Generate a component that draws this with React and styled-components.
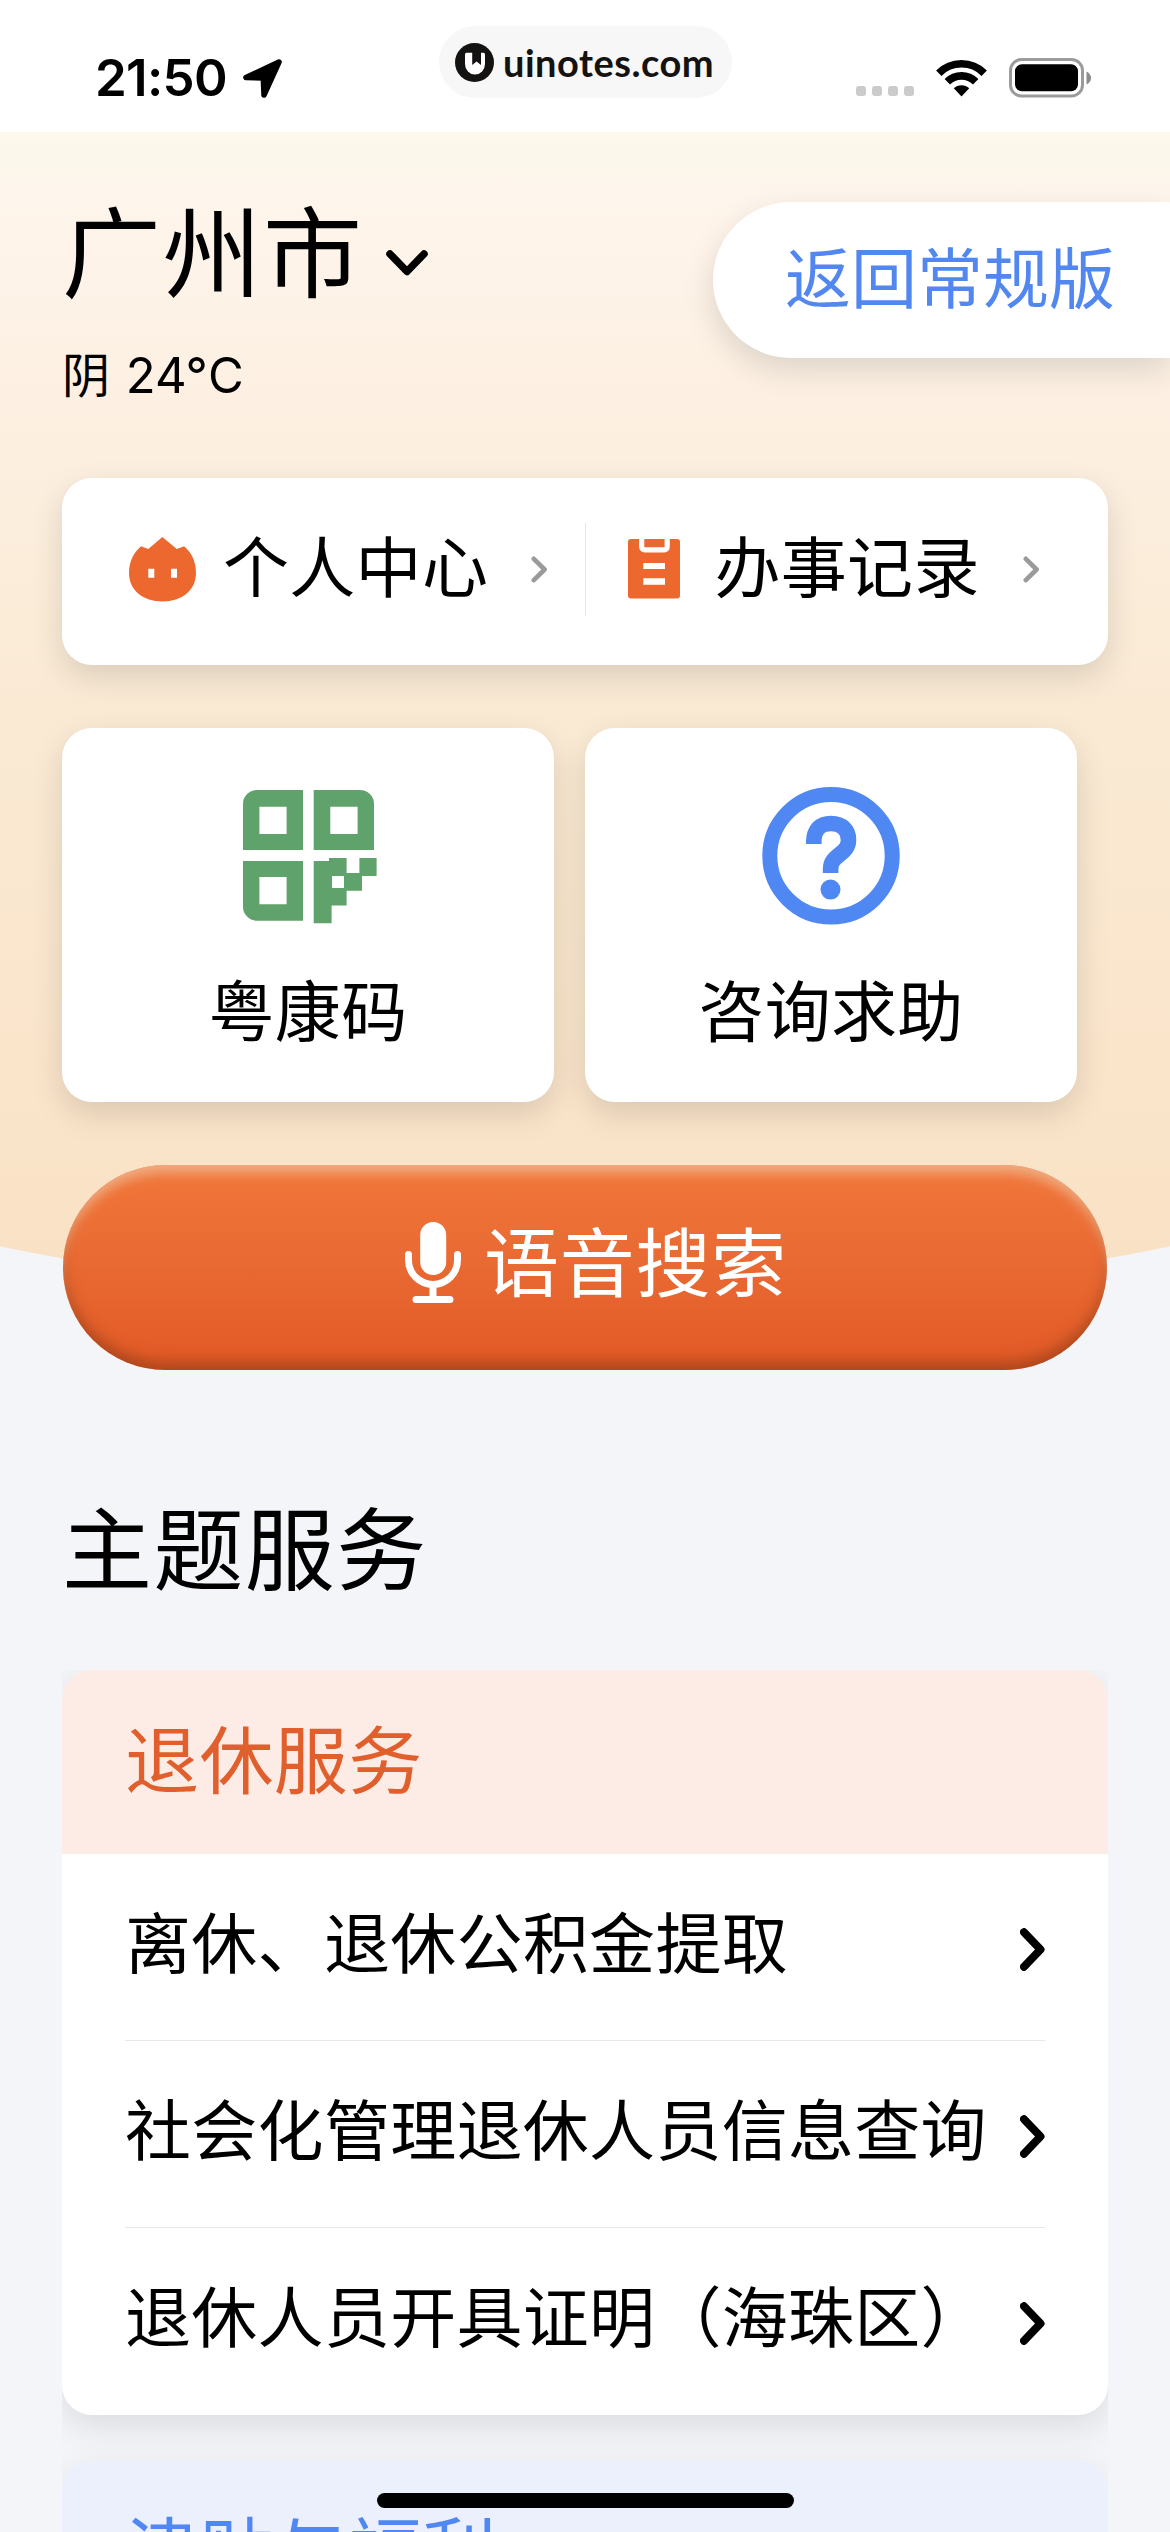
import styled, { createGlobalStyle } from "styled-components";

const GlobalStyle = createGlobalStyle`
  * {
    box-sizing: border-box;
  }

  body {
    margin: 0;
    background-color: #f3f5f9;
    color: #000;
    font-family: "Noto Sans CJK SC", sans-serif;
  }
`;

const Page = styled.div`
  width: 1170px;
  height: 2532px;
  overflow: hidden;
  background-color: #f3f5f9;
`;

const StatusBar = styled.header`
  height: 132px;
  display: flex;
  justify-content: space-between;
  padding: 0 79px 0 95px;
  background-color: #fff;
`;

const StatusLeft = styled.div`
  width: 344px;
  height: 98px;
  display: flex;
  align-items: flex-end;
  gap: 15px;
`;

const Time = styled.span`
  height: 60px;
  line-height: 80px;
  width: 133px;
  font-family: Inter, sans-serif;
  font-size: 51px;
  font-weight: 600;
  letter-spacing: -0.7px;
  white-space: nowrap;
`;

const SitePill = styled.div`
  width: 293px;
  height: 72px;
  margin-top: 26px;
  padding-left: 16px;
  display: flex;
  align-items: center;
  gap: 9px;
  border-radius: 36px;
  background-color: #f7f7f7;
  color: #151212;
  font-family: Lato, sans-serif;
  font-size: 38px;
  font-weight: 700;
  letter-spacing: 0.5px;
  line-height: 70px;
`;

const StatusRight = styled.div`
  flex: 1;
  height: 98px;
  display: flex;
  justify-content: flex-end;
  align-items: flex-end;
  gap: 22px;
`;

const SignalDots = styled.div`
  display: flex;
  gap: 6px;
  padding-bottom: 2px;

  i {
    width: 10px;
    height: 10px;
    border-radius: 3px;
    background-color: #cbcbcb;
  }
`;

const Hero = styled.section`
  height: 1174px;
  padding: 0 62px;
  background: radial-gradient(
      circle 2925px at 50% -1751px,
      transparent calc(100% - 1px),
      #f3f5f9 100%
    ),
    linear-gradient(
      #fcf8eb 0,
      #fcf7eb 30px,
      #fef5ec 60px,
      #fdf0e2 270px,
      #faead4 580px,
      #fae4c9 1000px,
      #f8e0c2 1174px
    );
`;

const TopRow = styled.div`
  height: 346px;
  display: flex;
  justify-content: space-between;
  margin-right: -62px;
`;

const City = styled.div`
  display: flex;
  margin-top: 60px;
  font-size: 99px;
  line-height: 110px;
  letter-spacing: 1.5px;

  svg {
    margin: 58px 0 0 22px;
  }
`;

const Weather = styled.div`
  margin-top: 40px;
  font-size: 48px;
  line-height: 60px;

  span {
    margin-left: 5px;
    font-family: Inter, sans-serif;
    font-size: 49px;
  }
`;

const BackPill = styled.div`
  width: 457px;
  height: 156px;
  margin-top: 70px;
  padding-left: 72px;
  border-radius: 78px 0 0 78px;
  background-color: #fff;
  box-shadow: 0 12px 32px rgba(0, 0, 0, 0.13);
  color: #5287f0;
  font-size: 66px;
  line-height: 144px;
`;

const Card = styled.div`
  display: flex;
  border-radius: 30px;
  background-color: #fff;
  box-shadow: 0 12px 32px rgba(0, 0, 0, 0.13);
`;

const LinkCard = styled(Card)`
  height: 187px;
  align-items: center;
  padding-bottom: 5px;
`;

const LinkItem = styled.div`
  width: 523px;
  display: flex;
  align-items: center;
  padding-left: ${({ $left }) => $left}px;
  font-size: 66px;
  line-height: 94px;
  letter-spacing: 0.3px;
`;

const LinkLabel = styled.span`
  width: 308px;
  margin-left: ${({ $gap }) => $gap}px;
  padding-bottom: 12px;
`;

const Divider = styled.i`
  width: 1px;
  height: 93px;
  background-color: #e6e6e6;
`;

const Tiles = styled.div`
  display: flex;
  gap: 31px;
  margin: 63px 0;
`;

const Tile = styled(Card)`
  width: 492px;
  height: 374px;
  flex-direction: column;
  align-items: center;
  padding-top: ${({ $top }) => $top}px;
`;

const TileLabel = styled.span`
  margin-top: ${({ $gap }) => $gap}px;
  font-size: 66px;
  line-height: 96px;
  letter-spacing: 0.3px;
`;

const VoiceButton = styled.div`
  height: 205px;
  margin: 0 1px;
  padding: 0 0 7px 22px;
  display: flex;
  justify-content: center;
  align-items: center;
  gap: 23px;
  border-radius: 103px;
  background: linear-gradient(#f1773a, #ea6c34 40%, #e25926);
  box-shadow: inset 0 12px 12px -4px rgba(240, 190, 155, 0.75),
    inset 0 -10px 14px -2px rgba(130, 55, 20, 0.55);
  color: #fff;
  font-size: 75px;
  line-height: 100px;
  letter-spacing: 0.8px;

  svg {
    margin-bottom: 3px;
  }

  span {
    padding-bottom: 10px;
  }
`;

const Topics = styled.section`
  margin: 0 62px;
`;

const TopicsTitle = styled.h2`
  margin: 0;
  padding-top: 178px;
  height: 334px;
  font-size: 90px;
  font-weight: 400;
  line-height: 120px;
  letter-spacing: 1.4px;
`;

const TopicList = styled.div`
  margin-top: 30px;
  overflow: hidden;
  height: 862px;
`;

const Topic = styled.div`
  margin-bottom: 46px;
  border-radius: 30px;
  background-color: #fff;
  box-shadow: 0 12px 36px rgba(0, 0, 0, 0.1);
`;

const TopicName = styled.div`
  height: 184px;
  padding-left: 63px;
  border-radius: 30px 30px 0 0;
  background-color: ${({ $bg }) => $bg};
  color: ${({ $color }) => $color};
  font-size: 74px;
  line-height: 172px;
  letter-spacing: 0.4px;
`;

const Service = styled.div`
  height: 187px;
  margin: 0 63px;
  padding-top: 4px;
  display: flex;
  justify-content: space-between;
  align-items: center;
  border-bottom: 1px solid #e8e8e8;
  font-size: 66px;
  line-height: 94px;
  letter-spacing: 0.3px;
  white-space: nowrap;

  &:last-child {
    border-bottom-color: transparent;
  }

  span {
    padding-bottom: 20px;
  }
`;

const HomeBar = styled.div`
  position: absolute;
  left: 377px;
  top: 2493px;
  width: 417px;
  height: 15px;
  border-radius: 8px;
  background-color: #000;
`;

function LocationIcon() {
  return (
    <svg width="39" height="39" viewBox="0 0 39 39">
      <path
        d="M36 3 L3 18.5 L20.3 19 L21 36 Z"
        stroke="#000"
        strokeWidth="5.5"
        strokeLinejoin="round"
      />
    </svg>
  );
}

function SiteLogo() {
  return (
    <svg width="39" height="39" viewBox="0 0 39 39">
      <circle cx="19.5" cy="19.5" r="19.5" fill="#151212" />
      <path
        d="M11.5 9.8 H28.5 Q30 9.8 30 11.3 V21 A10 10.6 0 0 1 10 21 V11.3 Q10 9.8 11.5 9.8 Z"
        fill="#fff"
      />
      <path d="M17.2 8 H26 V22 L21.6 18.5 L17.2 22 Z" fill="#151212" />
    </svg>
  );
}

function WifiIcon() {
  return (
    <svg width="51" height="39" viewBox="0 0 51 39">
      <g fill="none" stroke="#000" strokeWidth="7.6">
        <path d="M2.8 14.2 A32 32 0 0 1 48.2 14.2" />
        <path d="M11.3 22.8 A20 20 0 0 1 39.7 22.8" />
      </g>
      <path d="M25.5 37.5 L17.8 29.3 A11 11 0 0 1 33.2 29.3 Z" />
    </svg>
  );
}

function BatteryIcon() {
  return (
    <svg width="82" height="40" viewBox="0 0 82 40">
      <rect
        x="1.5"
        y="1.5"
        width="72"
        height="36.5"
        rx="11"
        fill="none"
        stroke="#9b9b9b"
        strokeWidth="3"
      />
      <rect x="6" y="6.3" width="63" height="27" rx="7" />
      <path d="M77.5 13.5 Q82 16 82 20 Q82 24 77.5 26.5 Z" fill="#8c8c8c" />
    </svg>
  );
}

function ChevronDown() {
  return (
    <svg width="42" height="26" viewBox="0 0 42 26">
      <path
        d="M4 4 L21 21.5 L38 4"
        fill="none"
        stroke="#000"
        strokeWidth="7.5"
        strokeLinecap="round"
        strokeLinejoin="round"
      />
    </svg>
  );
}

function ChevronSmall() {
  return (
    <svg width="17" height="27" viewBox="0 0 17 27">
      <path
        d="M2.8 2.8 L13.6 13.5 L2.8 24.2"
        fill="none"
        stroke="#9a9a9a"
        strokeWidth="4.6"
        strokeLinecap="round"
        strokeLinejoin="round"
      />
    </svg>
  );
}

function ChevronRight() {
  return (
    <svg width="25" height="43" viewBox="0 0 25 43">
      <path
        d="M4 4.2 L20.5 21.5 L4 38.8"
        fill="none"
        stroke="#000"
        strokeWidth="8"
        strokeLinecap="round"
        strokeLinejoin="round"
      />
    </svg>
  );
}

function FaceIcon() {
  return (
    <svg width="67" height="65" viewBox="0 0 67 65">
      <path
        d="M33.4 0 L47.7 12 L55.2 9.2 C63 16 67 25 67 36 C67 53 53 64.5 33.5 64.5 C14 64.5 0 53 0 36 C0 25 4.2 16 12 9.2 L19.3 12 Z"
        fill="#ec682f"
      />
      <path d="M19.3 31.8 h6 v9 h-6 Z M42 31.8 h6 v9 h-6 Z" fill="#fff" />
    </svg>
  );
}

function RecordIcon() {
  return (
    <svg width="52" height="60" viewBox="0 0 52 60">
      <rect width="52" height="59.5" rx="3" fill="#ec682f" />
      <path
        d="M13.7 0 V7.6 Q13.7 10.8 16.9 10.8 H36 Q39.2 10.8 39.2 7.6 V0"
        fill="none"
        stroke="#fff"
        strokeWidth="5.2"
      />
      <path d="M15.3 24 H37 V30 H15.3 Z M15.3 39.3 H37 V45.7 H15.3 Z" fill="#fff" />
    </svg>
  );
}

function HealthCodeIcon() {
  return (
    <svg width="137" height="134" viewBox="-3 0 137 134" fill="#60a26b">
      <path
        fillRule="evenodd"
        d="M14 0 H60 V60 H0 V14 A14 14 0 0 1 14 0 Z M16.4 16.7 V44 H43.6 V16.7 Z"
      />
      <path
        fillRule="evenodd"
        d="M70.7 0 H117 A14 14 0 0 1 131 14 V60 H70.7 Z M87.3 16.7 V44 H114.6 V16.7 Z"
      />
      <path
        fillRule="evenodd"
        d="M0 71 H60 V130.7 H14 A14 14 0 0 1 0 116.7 Z M16.4 87 V114.3 H43.6 V87 Z"
      />
      <path
        fillRule="evenodd"
        d="M70.7 71 H86 V68 H103.6 V83 H116.4 V68 H133.6 V86 H119 V100.7 H103.6 V115.5 H88.6 V133.3 H70.7 Z M89 86 V98 H101 V86 Z"
      />
    </svg>
  );
}

function HelpIcon() {
  return (
    <svg width="138" height="138" viewBox="0 0 138 138">
      <circle cx="69" cy="68.8" r="61.2" fill="none" stroke="#4f87f3" strokeWidth="15" />
      <path
        d="M51.8 57 V54.5 C52 43 58 36.5 69 36.5 C80 36.5 86.5 43 86.5 53 C86.5 68 68.6 67 68.6 82 V86"
        fill="none"
        stroke="#4f87f3"
        strokeWidth="15.6"
      />
      <circle cx="68.5" cy="102.6" r="10" fill="#4f87f3" />
    </svg>
  );
}

function MicIcon() {
  return (
    <svg width="56" height="81" viewBox="0 0 56 81">
      <rect x="15.2" width="26" height="53" rx="13" fill="#fff" />
      <path
        d="M3.5 32.5 V38 A24.5 24.5 0 0 0 52.5 38 V32.5 M28 63 V76 M11 77.5 H45"
        fill="none"
        stroke="#fff"
        strokeWidth="7"
        strokeLinecap="round"
      />
    </svg>
  );
}

const services = [
  "离休、退休公积金提取",
  "社会化管理退休人员信息查询",
  "退休人员开具证明（海珠区）",
];

function App() {
  return (
    <Page>
      <GlobalStyle />
      <StatusBar>
        <StatusLeft>
          <Time>21:50</Time>
          <LocationIcon />
        </StatusLeft>
        <SitePill>
          <SiteLogo />
          uinotes.com
        </SitePill>
        <StatusRight>
          <SignalDots>
            <i />
            <i />
            <i />
            <i />
          </SignalDots>
          <WifiIcon />
          <BatteryIcon />
        </StatusRight>
      </StatusBar>

      <Hero>
        <TopRow>
          <div>
            <City>
              广州市
              <ChevronDown />
            </City>
            <Weather>
              阴 <span>24°C</span>
            </Weather>
          </div>
          <BackPill>返回常规版</BackPill>
        </TopRow>

        <LinkCard>
          <LinkItem $left={67}>
            <FaceIcon />
            <LinkLabel $gap={27}>个人中心</LinkLabel>
            <ChevronSmall />
          </LinkItem>
          <Divider />
          <LinkItem $left={42}>
            <RecordIcon />
            <LinkLabel $gap={35}>办事记录</LinkLabel>
            <ChevronSmall />
          </LinkItem>
        </LinkCard>

        <Tiles>
          <Tile $top={62}>
            <HealthCodeIcon />
            <TileLabel $gap={35}>粤康码</TileLabel>
          </Tile>
          <Tile $top={59}>
            <HelpIcon />
            <TileLabel $gap={34}>咨询求助</TileLabel>
          </Tile>
        </Tiles>

        <VoiceButton>
          <MicIcon />
          <span>语音搜索</span>
        </VoiceButton>
      </Hero>

      <Topics>
        <TopicsTitle>主题服务</TopicsTitle>
        <TopicList>
          <Topic>
            <TopicName $bg="#fcece5" $color="#e05f2c">
              退休服务
            </TopicName>
            {services.map((name) => (
              <Service key={name}>
                <span>{name}</span>
                <ChevronRight />
              </Service>
            ))}
          </Topic>
          <Topic>
            <TopicName $bg="#ecf0fc" $color="#4f87f3">
              津贴与福利
            </TopicName>
          </Topic>
        </TopicList>
      </Topics>
      <HomeBar />
    </Page>
  );
}

export default App;
